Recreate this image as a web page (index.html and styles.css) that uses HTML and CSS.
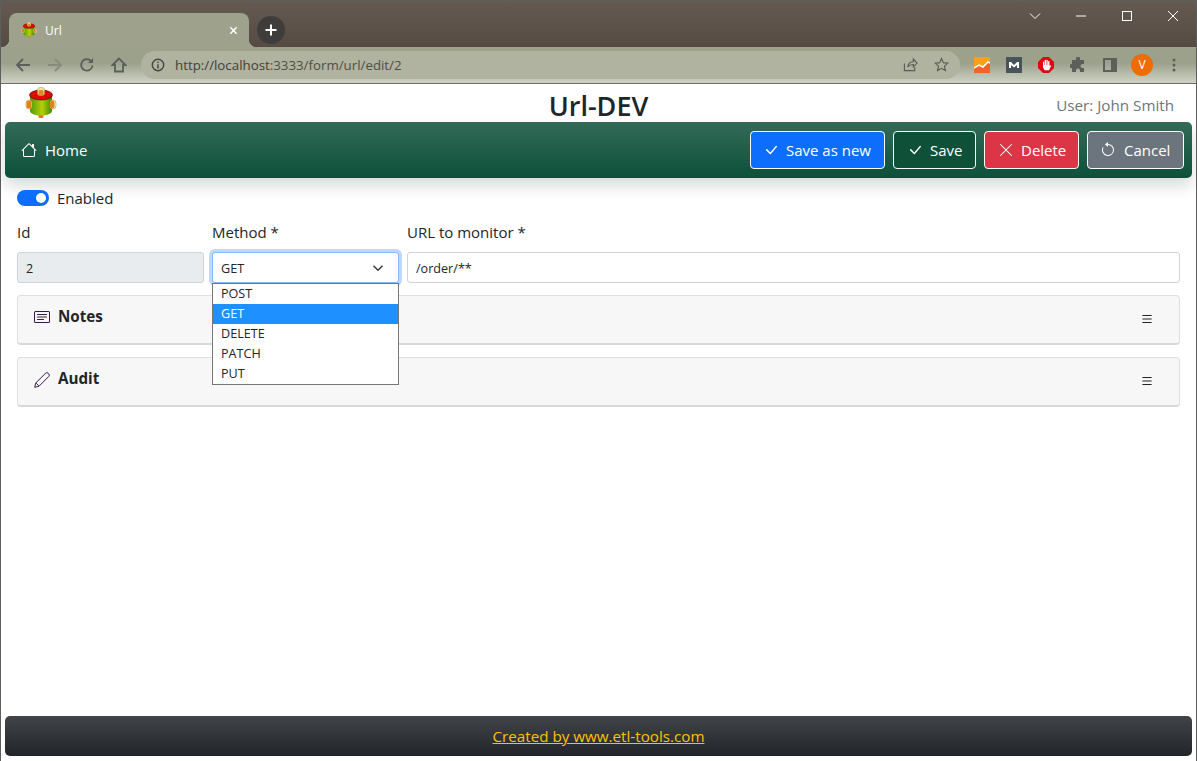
FILE: index.html
```html
<!DOCTYPE html>
<html lang="en">
<head>
    <meta charset="UTF-8">
    <meta name="viewport" content="width=device-width, initial-scale=1.0">
    <title>Url</title>
    <link rel="stylesheet" href="styles.css">
</head>
<body>

<div class="window">

    <!-- browser chrome -->
    <div class="tabstrip">
        <div class="tab">
            <svg class="favicon" viewBox="0 0 32 32"><use href="#logo"/></svg>
            <span class="tab-title">Url</span>
            <svg class="tab-close" viewBox="0 0 10 10"><path d="M1.5 1.5l7 7M8.5 1.5l-7 7"/></svg>
        </div>
        <div class="new-tab"><svg viewBox="0 0 12 12"><path d="M6 0.5v11M0.5 6h11"/></svg></div>
        <div class="window-controls">
            <svg class="wc wc-chevron" viewBox="0 0 12 8"><path d="M1 1.5l5 5 5-5"/></svg>
            <svg class="wc" viewBox="0 0 12 12"><path d="M1 6h10"/></svg>
            <svg class="wc" viewBox="0 0 12 12"><rect x="1.5" y="1.5" width="9" height="9"/></svg>
            <svg class="wc" viewBox="0 0 12 12"><path d="M1 1l10 10M11 1L1 11"/></svg>
        </div>
    </div>

    <div class="toolbar">
        <svg class="nav-icon" viewBox="0 0 16 16"><path d="M15 8H2M8 2L2 8l6 6"/></svg>
        <svg class="nav-icon nav-off" viewBox="0 0 16 16"><path d="M1 8h13M8 2l6 6-6 6"/></svg>
        <svg class="nav-icon" viewBox="0 0 16 16"><path d="M13.5 8.5A5.7 5.7 0 1 1 12 4"/><path class="fill" d="M14 1v5H9z"/></svg>
        <svg class="nav-icon" viewBox="0 0 16 16"><path d="M8 1.500L1.500 8H4v6.500h8V8h2.500z"/></svg>
        <div class="omnibox">
            <svg class="info" viewBox="0 0 16 16"><circle cx="8" cy="8" r="6.500"/><path d="M8 7v5M8 4v1.800"/></svg>
            <span class="url"><span class="url-host">http://localhost</span>:3333/form/url/edit/2</span>
            <svg class="omni-icon" viewBox="0 0 16 16"><path d="M1.500 7v7.500h11V11M5 10.500C5.500 7 8 5 11 5V2l4 4.500L11 10.500V8C8.500 8 6.500 8.500 5 10.500z"/></svg>
            <svg class="omni-icon" viewBox="0 0 16 16"><path d="M8 1.500l2 4.500 4.800.5-3.600 3.200 1 4.800L8 12.100 3.800 14.500l1-4.800L1.200 6.500 6 6z"/></svg>
        </div>
        <div class="extensions">
            <svg class="ext" viewBox="0 0 16 16"><rect width="16" height="16" fill="#f4a11f"/><path d="M0 16V11l5-3 4 2 5-5 2 1v10z" fill="#f2622e"/><path d="M0 11l5-3 4 2 5-5 2 1" fill="none" stroke="#fff" stroke-width="1.500"/></svg>
            <svg class="ext" viewBox="0 0 16 16"><rect width="16" height="16" fill="#47545a"/><path d="M3 11V5h2l3 3 3-3h2v6h-2V8L8 10.500 5 8v3z" fill="#fff"/></svg>
            <svg class="ext" viewBox="0 0 16 16">
                <path d="M5 0h6l5 5v6l-5 5H5l-5-5V5z" fill="#e0060f"/>
                <g fill="#fff">
                    <rect x="5" y="4.500" width="1.300" height="5" rx="0.600"/>
                    <rect x="6.700" y="2.800" width="1.300" height="6" rx="0.600"/>
                    <rect x="8.400" y="2.800" width="1.300" height="6" rx="0.600"/>
                    <rect x="10.100" y="4" width="1.300" height="5.500" rx="0.600"/>
                    <path d="M5 8h6.400v1.500l.9-1.300.9.600-2.200 4.400H6.600L5 10.500z"/>
                </g>
            </svg>
            <svg class="ext" viewBox="0 0 16 16"><path d="M6 1.500a2 2 0 0 1 4 0V3h4v4h-1.500a2 2 0 0 0 0 4H14v4H10v-1.500a2 2 0 0 0-4 0V15H2v-4h-.5a2 2 0 0 1 0-4H2V3h4z" fill="#5c5f5c"/></svg>
            <svg class="ext ext-panel" viewBox="0 0 14 14"><path d="M0 0h14v14H0zM2 2v10h6V2z" fill="#5c5f5c" fill-rule="evenodd"/><rect x="9" y="2" width="3" height="10" fill="#5c5f5c"/></svg>
            <div class="avatar">V</div>
            <svg class="menu-dots" viewBox="0 0 4 16"><circle cx="2" cy="3" r="1.500"/><circle cx="2" cy="8" r="1.500"/><circle cx="2" cy="13" r="1.500"/></svg>
        </div>
    </div>

    <!-- the page itself -->
    <div class="page">

        <svg width="0" height="0" class="defs">
            <defs>
                <linearGradient id="drum" x1="0" x2="1" y1="0" y2="0">
                    <stop offset="0" stop-color="#4d9a0a"/>
                    <stop offset="0.55" stop-color="#b6cf08"/>
                    <stop offset="1" stop-color="#3e8a08"/>
                </linearGradient>
                <g id="logo">
                    <rect x="13.500" y="26" width="5" height="5" rx="1.500" fill="#dd7a14"/>
                    <path d="M5 7v17c0 2.500 5 4.500 11 4.500s11-2 11-4.500V7z" fill="url(#drum)"/>
                    <rect x="1" y="13" width="6" height="9" rx="3" fill="#fbeec0" stroke="#b08a40" stroke-width="0.500"/>
                    <rect x="1.500" y="13.500" width="5" height="8" rx="2.500" fill="#e5811a"/>
                    <rect x="25" y="13" width="6" height="9" rx="3" fill="#fbeec0" stroke="#b08a40" stroke-width="0.500"/>
                    <rect x="25" y="13.500" width="4.500" height="8" rx="2.200" fill="#e5811a"/>
                    <ellipse cx="16" cy="8" rx="11.500" ry="5" fill="#dd0a06" stroke="#300" stroke-width="0.600"/>
                    <rect x="12.500" y="0.500" width="7" height="8" rx="2.500" fill="#f8e4a8" stroke="#a88a4a" stroke-width="0.500"/>
                    <rect x="13.500" y="3" width="5" height="5.500" rx="1.500" fill="#e08a24"/>
                </g>
            </defs>
        </svg>

        <header class="page-head">
            <svg class="logo" viewBox="0 0 32 32"><use href="#logo"/></svg>
            <h1>Url-DEV</h1>
            <span class="user">User: John Smith</span>
        </header>

        <nav class="navbar">
            <a class="nav-home" href="#">
                <svg class="bi" viewBox="0 0 16 16"><path d="M8.707 1.500a1 1 0 0 0-1.414 0L.646 8.146a.5.5 0 0 0 .708.708L2 8.207V13.500A1.500 1.500 0 0 0 3.500 15h9a1.500 1.500 0 0 0 1.500-1.500V8.207l.646.647a.5.5 0 0 0 .708-.708L13 5.793V2.500a.5.5 0 0 0-.5-.5h-1a.5.5 0 0 0-.5.5v1.293L8.707 1.500ZM13 7.207V13.500a.5.5 0 0 1-.5.5h-9a.5.5 0 0 1-.5-.5V7.207l5-5 5 5Z"/></svg>
                Home
            </a>
            <div class="actions">
                <button class="btn btn-primary">
                    <svg class="bi" viewBox="0 0 16 16"><path d="M12.736 3.970a.733.733 0 0 1 1.047 0c.286.289.29.756.01 1.050L7.880 12.010a.733.733 0 0 1-1.065.02L3.217 8.384a.757.757 0 0 1 0-1.060.733.733 0 0 1 1.047 0l3.052 3.093 5.400-6.425a.247.247 0 0 1 .02-.022Z"/></svg>
                    Save as new
                </button>
                <button class="btn btn-save">
                    <svg class="bi" viewBox="0 0 16 16"><path d="M12.736 3.970a.733.733 0 0 1 1.047 0c.286.289.29.756.01 1.050L7.880 12.010a.733.733 0 0 1-1.065.02L3.217 8.384a.757.757 0 0 1 0-1.060.733.733 0 0 1 1.047 0l3.052 3.093 5.400-6.425a.247.247 0 0 1 .02-.022Z"/></svg>
                    Save
                </button>
                <button class="btn btn-danger">
                    <svg class="bi" viewBox="0 0 16 16"><path d="M2.146 2.854a.5.5 0 1 1 .708-.708L8 7.293l5.146-5.147a.5.5 0 0 1 .708.708L8.707 8l5.147 5.146a.5.5 0 0 1-.708.708L8 8.707l-5.146 5.147a.5.5 0 0 1-.708-.708L7.293 8 2.146 2.854Z"/></svg>
                    Delete
                </button>
                <button class="btn btn-secondary">
                    <svg class="bi" viewBox="0 0 16 16"><path d="M8 3a5 5 0 1 1-4.546 2.914.5.5 0 0 0-.908-.417A6 6 0 1 0 8 2v1z"/><path d="M8 4.466V.534a.25.25 0 0 0-.41-.192L5.230 2.308a.25.25 0 0 0 0 .384l2.360 1.966A.25.25 0 0 0 8 4.466z"/></svg>
                    Cancel
                </button>
            </div>
        </nav>

        <main class="content">
            <div class="switch-row">
                <span class="switch"><span class="knob"></span></span>
                <span>Enabled</span>
            </div>

            <div class="fields">
                <div class="field">
                    <label for="urlId">Id</label>
                    <input id="urlId" class="control control-off" type="text" value="2" readonly>
                </div>
                <div class="field field-select">
                    <label>Method *</label>
                    <div class="control control-focus">
                        <span>GET</span>
                        <svg class="chevron" viewBox="0 0 16 16"><path d="M2 5l6 6 6-6"/></svg>
                    </div>
                    <ul class="options">
                        <li>POST</li>
                        <li class="selected">GET</li>
                        <li>DELETE</li>
                        <li>PATCH</li>
                        <li>PUT</li>
                    </ul>
                </div>
                <div class="field">
                    <label for="urlPath">URL to monitor *</label>
                    <input id="urlPath" class="control" type="text" value="/order/**">
                </div>
            </div>

            <section class="panel">
                <div class="panel-title">
                    <svg class="bi panel-icon" viewBox="0 0 16 16"><path d="M14.500 3a.5.5 0 0 1 .5.5v9a.5.5 0 0 1-.5.5h-13a.5.5 0 0 1-.5-.5v-9a.5.5 0 0 1 .5-.5h13zm-13-1A1.500 1.500 0 0 0 0 3.500v9A1.500 1.500 0 0 0 1.500 14h13a1.500 1.500 0 0 0 1.500-1.500v-9A1.500 1.500 0 0 0 14.500 2h-13z"/><path d="M3 5.500a.5.5 0 0 1 .5-.5h9a.5.5 0 0 1 0 1h-9a.5.5 0 0 1-.5-.5zM3 8a.5.5 0 0 1 .5-.5h9a.5.5 0 0 1 0 1h-9A.5.5 0 0 1 3 8zm0 2.500a.5.5 0 0 1 .5-.5h6a.5.5 0 0 1 0 1h-6a.5.5 0 0 1-.5-.5z"/></svg>
                    Notes
                </div>
                <svg class="bi panel-menu" viewBox="0 0 16 16"><path d="M2.500 12a.5.5 0 0 1 .5-.5h10a.5.5 0 0 1 0 1H3a.5.5 0 0 1-.5-.5zm0-4a.5.5 0 0 1 .5-.5h10a.5.5 0 0 1 0 1H3a.5.5 0 0 1-.5-.5zm0-4a.5.5 0 0 1 .5-.5h10a.5.5 0 0 1 0 1H3a.5.5 0 0 1-.5-.5z"/></svg>
            </section>

            <section class="panel">
                <div class="panel-title">
                    <svg class="bi panel-icon pencil" viewBox="0 0 16 16"><path d="M.700 15.300l1-4.200L11.600 1.200a1.800 1.800 0 0 1 2.500 0l.7.700a1.800 1.800 0 0 1 0 2.500L4.900 14.300zM2.200 11.200l2.600 2.600"/></svg>
                    Audit
                </div>
                <svg class="bi panel-menu" viewBox="0 0 16 16"><path d="M2.500 12a.5.5 0 0 1 .5-.5h10a.5.5 0 0 1 0 1H3a.5.5 0 0 1-.5-.5zm0-4a.5.5 0 0 1 .5-.5h10a.5.5 0 0 1 0 1H3a.5.5 0 0 1-.5-.5zm0-4a.5.5 0 0 1 .5-.5h10a.5.5 0 0 1 0 1H3a.5.5 0 0 1-.5-.5z"/></svg>
            </section>
        </main>

        <footer class="footer">
            <a href="#">Created by www.etl-tools.com</a>
        </footer>
    </div>
</div>

</body>
</html>
```

FILE: styles.css
```css
* {
    box-sizing: border-box;
}
html, body {
    height: 100%;
}
body {
    margin: 0;
    font-family: "Open Sans", "Noto Sans", Arial, sans-serif;
    font-size: 15px;
    color: #212529;
    background-color: #fff;
    overflow: hidden;
}
.window {
    display: flex;
    flex-direction: column;
    height: 761px;
    border: 1px solid #5e5e5e;
    border-bottom: 0;
}

/* browser chrome */
.tabstrip {
    display: flex;
    align-items: flex-end;
    flex: none;
    height: 46px;
    padding-left: 8px;
    background: linear-gradient(#655a50, #564b43);
}
.tab {
    position: relative;
    display: flex;
    align-items: center;
    width: 240px;
    height: 34px;
    padding: 0 11px 0 12px;
    border-radius: 8px 8px 0 0;
    background-color: #9ea28d;
    color: #fff;
    font-size: 12px;
}
.tab::before, .tab::after {
    content: "";
    position: absolute;
    bottom: 0;
    width: 8px;
    height: 8px;
}
.tab::before {
    left: -8px;
    background: radial-gradient(circle at 0 0, transparent 8px, #9ea28d 8.500px);
}
.tab::after {
    right: -8px;
    background: radial-gradient(circle at 100% 0, transparent 8px, #9ea28d 8.500px);
}
.favicon {
    width: 16px;
    height: 16px;
}
.tab-title {
    flex: 1;
    margin-left: 8px;
}
.tab-close {
    width: 9px;
    height: 9px;
    fill: none;
    stroke: #fff;
    stroke-width: 1.6;
}
.new-tab {
    display: flex;
    align-items: center;
    justify-content: center;
    width: 28px;
    height: 28px;
    margin: 0 0 3px 8px;
    border-radius: 50%;
    background-color: #3f3d3b;
}
.new-tab svg {
    width: 12px;
    height: 12px;
    fill: none;
    stroke: #fff;
    stroke-width: 2;
}
.window-controls {
    display: flex;
    align-self: flex-start;
    align-items: center;
    gap: 34px;
    margin-left: auto;
    padding: 9px 17px 0 0;
}
.wc {
    width: 12px;
    height: 12px;
    fill: none;
    stroke: #fff;
    stroke-width: 1;
}
.toolbar {
    display: flex;
    align-items: center;
    flex: none;
    height: 37px;
    padding: 0 0 1px 14px;
    border-bottom: 1px solid #6f6f6a;
    background: linear-gradient(#9ca18c 0, #9ca18c 45%, #cbcec0 95%);
}
.nav-icon {
    width: 16px;
    height: 16px;
    margin-right: 16px;
    fill: none;
    stroke: #5a5f5c;
    stroke-width: 1.8;
}
.nav-off {
    stroke: #878b7d;
}
.nav-icon .fill {
    fill: #5a5f5c;
    stroke: none;
}
.omnibox {
    display: flex;
    align-items: center;
    width: 819px;
    height: 28px;
    margin-left: -2px;
    padding: 0 3px 0 10px;
    border-radius: 14px;
    background-color: #b0b39f;
    font-family: "Open Sans", sans-serif;
    font-size: 13.300px;
    color: #4d4f47;
}
.info {
    width: 14px;
    height: 14px;
    fill: none;
    stroke: #43453f;
    stroke-width: 1.6;
}
.url {
    flex: 1;
    margin-left: 10px;
}
.url-host {
    color: #3f4139;
}
.omni-icon {
    width: 15px;
    height: 15px;
    margin: 0 8px 0 8px;
    fill: none;
    stroke: #5a5d53;
    stroke-width: 1.2;
}
.extensions {
    display: flex;
    align-items: center;
    gap: 16px;
    margin-left: 14px;
}
.ext {
    width: 16px;
    height: 16px;
}
.ext-panel {
    width: 14px;
    height: 14px;
    margin-left: 1px;
}
.avatar {
    width: 22px;
    height: 22px;
    margin-left: -2px;
    border-radius: 50%;
    background-color: #ee6c00;
    color: #fff;
    font-size: 12px;
    line-height: 22px;
    text-align: center;
}
.menu-dots {
    width: 4px;
    height: 16px;
    margin-left: 3px;
    fill: #5c5f5c;
}

/* page */
.page {
    display: flex;
    flex-direction: column;
    flex: 1;
    min-height: 0;
    padding: 0 4px 5px;
}
.defs {
    position: absolute;
}
.page-head {
    display: flex;
    align-items: center;
    justify-content: space-between;
    flex: none;
    position: relative;
    height: 38px;
    padding: 4px 18px 0 20px;
}
.logo {
    width: 32px;
    height: 32px;
    margin-top: -4px;
}
.page-head h1 {
    position: absolute;
    left: 0;
    right: 0;
    margin: 0;
    font-size: 27px;
    font-weight: 600;
    text-align: center;
}
.user {
    font-size: 15.200px;
    color: #6c757d;
}
.navbar {
    display: flex;
    align-items: center;
    justify-content: space-between;
    flex: none;
    height: 56px;
    padding: 0 8px 0 16px;
    border-radius: 5px;
    background: linear-gradient(#336b58, #0d5039);
    box-shadow: 0 8px 16px rgba(0, 0, 0, 0.15);
}
.bi {
    width: 16px;
    height: 16px;
    fill: currentColor;
    flex: none;
}
.nav-home {
    display: flex;
    align-items: center;
    gap: 8px;
    color: #fff;
    text-decoration: none;
}
.actions {
    display: flex;
    gap: 8px;
}
.btn {
    display: flex;
    align-items: center;
    gap: 7px;
    height: 38px;
    padding: 0 12px;
    border: 1px solid #fff;
    border-radius: 4px;
    color: #fff;
    font: inherit;
}
.btn-primary {
    width: 135px;
    background-color: #0d6efd;
}
.btn-save {
    width: 83px;
    padding-left: 13px;
    background-color: #0f5039;
}
.btn-danger {
    width: 95px;
    padding-left: 13px;
    background-color: #dc3545;
}
.btn-secondary {
    width: 97px;
    gap: 8px;
    background-color: #6c757d;
}

/* form */
.content {
    flex: 1;
    padding: 12px 12px 0;
}
.switch-row {
    display: flex;
    align-items: center;
    gap: 8px;
    height: 16px;
}
.switch {
    display: flex;
    justify-content: flex-end;
    align-items: center;
    width: 32px;
    height: 16px;
    padding-right: 3px;
    border-radius: 8px;
    background-color: #0d6efd;
}
.knob {
    width: 10px;
    height: 10px;
    border-radius: 50%;
    background-color: #fff;
}
.fields {
    display: grid;
    grid-template-columns: 187px 187px 1fr;
    gap: 8px;
    margin-top: 16px;
}
.field {
    position: relative;
    display: flex;
    flex-direction: column;
}
.field label {
    height: 30px;
    line-height: 20px;
}
.control {
    width: 100%;
    height: 31px;
    padding: 1px 8px 0;
    border: 1px solid #ced4da;
    border-radius: 3px;
    background-color: #fff;
    color: #212529;
    font-family: inherit;
    font-size: 12.600px;
}
.control-off {
    background-color: #e9ecef;
}
.control-focus {
    display: flex;
    align-items: center;
    justify-content: space-between;
    border-color: #86b7fe;
    box-shadow: 0 0 0 3px #bfd8fd;
}
.chevron {
    width: 12px;
    height: 12px;
    margin-right: 6px;
    fill: none;
    stroke: #343a40;
    stroke-width: 2;
}
.options {
    position: absolute;
    top: 61px;
    left: 0;
    right: 0;
    z-index: 2;
    margin: 0;
    padding: 0;
    border: 1px solid #767676;
    background-color: #fff;
    font-size: 12.600px;
    list-style: none;
}
.options li {
    height: 20px;
    padding-left: 8px;
    line-height: 20px;
}
.options .selected {
    background-color: #1e90ff;
    color: #fff;
}
.panel {
    display: flex;
    justify-content: space-between;
    height: 50px;
    margin-top: 12px;
    padding: 10px 25px 0 16px;
    border: 1px solid #dfdfdf;
    border-bottom: 2px solid #d8d8d8;
    border-radius: 4px;
    background-color: #f7f7f7;
}
.panel-title {
    display: flex;
    align-items: flex-start;
    gap: 8px;
    font-size: 15.200px;
    font-weight: 700;
    line-height: 20px;
}
.panel-icon {
    margin-top: 3px;
    color: #3a1a4a;
}
.pencil {
    margin-top: 4px;
    fill: none;
    stroke: currentColor;
    stroke-width: 1;
}
.panel-menu {
    margin-top: 6px;
    width: 14px;
    height: 14px;
}
.footer {
    flex: none;
    height: 40px;
    border-radius: 5px;
    background: linear-gradient(#41454a, #212529);
    font-size: 15.200px;
    line-height: 40px;
    text-align: center;
}
.footer a {
    color: #ffc107;
}
```
